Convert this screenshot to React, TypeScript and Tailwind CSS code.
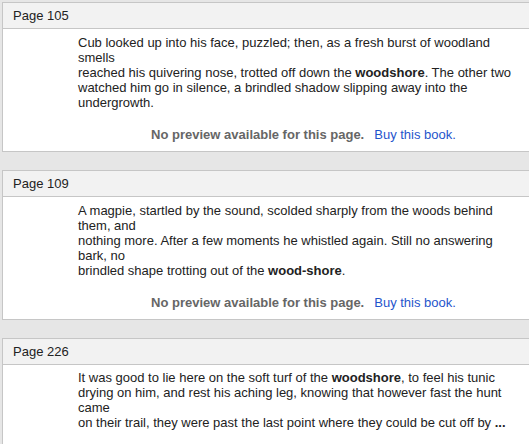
import React from "react";

type Line = React.ReactNode;

function Card({ page, lines }: { page: string; lines: Line[] }) {
  return (
    <div className="border-l border-t border-b border-[#c6c6c6] bg-white">
      <div className="h-[26px] bg-[#f2f2f2] border-b border-[#c6c6c6] flex items-center pl-[10px] text-[13px] text-[#222]">
        {page}
      </div>
      <div className="pl-[75px] pt-[6px] pb-[9px] text-[13px] leading-[15px] text-[#222]">
        <div>
          {lines.map((l, i) => (
            <div key={i} className="whitespace-nowrap">
              {l}
            </div>
          ))}
        </div>
        <div className="mt-[17px] text-center whitespace-nowrap">
          <span className="font-bold text-[#666]">No preview available for this page.</span>
          <span className="ml-[10px] text-[#1f55cc]">Buy this book.</span>
        </div>
      </div>
    </div>
  );
}

function Card3({ page, lines }: { page: string; lines: Line[] }) {
  return (
    <div className="border-l border-t border-[#c6c6c6] bg-white">
      <div className="h-[26px] bg-[#f2f2f2] border-b border-[#c6c6c6] flex items-center pl-[10px] text-[13px] text-[#222]">
        {page}
      </div>
      <div className="pl-[75px] pt-[5px] pb-[20px] text-[13px] leading-[15px] text-[#222]">
        {lines.map((l, i) => (
          <div key={i} className="whitespace-nowrap">
            {l}
          </div>
        ))}
      </div>
    </div>
  );
}

export default function App() {
  return (
    <div
      className="w-[529px] h-[444px] overflow-hidden bg-[#e6e6e6] pl-[2px] pt-[2px]"
      style={{ fontFamily: '"Liberation Sans", Arial, sans-serif' }}
    >
      <div className="flex flex-col gap-[18px]">
        <Card
          page="Page 105"
          lines={[
            "Cub looked up into his face, puzzled; then, as a fresh burst of woodland",
            "smells",
            <>
              reached his quivering nose, trotted off down the <b>woodshore</b>. The other two
            </>,
            "watched him go in silence, a brindled shadow slipping away into the",
            "undergrowth.",
          ]}
        />
        <Card
          page="Page 109"
          lines={[
            "A magpie, startled by the sound, scolded sharply from the woods behind",
            "them, and",
            "nothing more. After a few moments he whistled again. Still no answering",
            "bark, no",
            <>
              brindled shape trotting out of the <b>wood-shore</b>.
            </>,
          ]}
        />
        <Card3
          page="Page 226"
          lines={[
            <>
              It was good to lie here on the soft turf of the <b>woodshore</b>, to feel his tunic
            </>,
            "drying on him, and rest his aching leg, knowing that however fast the hunt",
            "came",
            <>
              on their trail, they were past the last point where they could be cut off by <b>...</b>
            </>,
          ]}
        />
      </div>
    </div>
  );
}
